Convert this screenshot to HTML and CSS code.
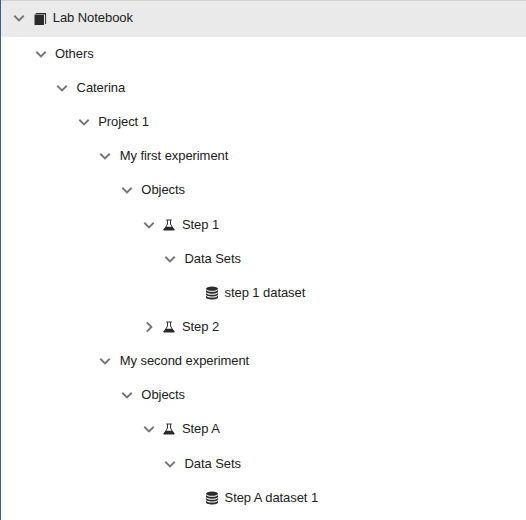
FILE: index.html
```
<!DOCTYPE html>
<html lang="en">
<head>
<meta charset="utf-8">
<title>Lab Notebook</title>
<link rel="stylesheet" href="styles.css">
</head>
<body>
<svg class="defs" width="0" height="0" aria-hidden="true">
  <symbol id="chevron" viewBox="0 0 12 12"><path d="M1.300 3.800 6 8.400l4.700-4.600" fill="none" stroke="#757575" stroke-width="1.900"/></symbol>
  <symbol id="book" viewBox="0 0 14 14"><path d="M1 3 3 1h10v10.500h-1V3z" fill="#8d8d8d"/><path d="M1 3h1v10H1z" fill="#8d8d8d"/><path d="M2 3h9v10H2zM3 1h10v1H3zM12.200 1.500h.9V12h-.9z" fill="#2b2b2b"/></symbol>
  <symbol id="flask" viewBox="0 0 12 12"><path d="M3.200 1h5.600M4.500 1v4L1.500 10.400h9L7.500 5V1" fill="none" stroke="#333" stroke-width="1"/><path d="M2.600 7.800h6.800l2 2.500V11.500H.6v-1.200z" fill="#2b2b2b"/></symbol>
  <symbol id="database" viewBox="0 0 14 14"><g fill="#2b2b2b"><ellipse cx="7" cy="2.700" rx="6" ry="2.100"/><path d="M1 4c.9 1.300 3.200 1.800 6 1.800S12.100 5.300 13 4v1.700c0 1.100-2.700 2-6 2s-6-.9-6-2z"/><path d="M1 6.900c.9 1.300 3.200 1.800 6 1.800s5.100-.5 6-1.800v1.700c0 1.100-2.700 2-6 2s-6-.9-6-2z"/><path d="M1 9.800c.9 1.300 3.200 1.800 6 1.800s5.100-.5 6-1.800v1.700c0 1.100-2.700 2-6 2s-6-.9-6-2z"/></g></symbol>
</svg>
<nav class="tree">
  <div class="row root"><svg class="toggle"><use href="#chevron"/></svg><svg class="icon book"><use href="#book"/></svg><span>Lab Notebook</span></div>
  <ul>
    <li><div class="row"><svg class="toggle"><use href="#chevron"/></svg><span>Others</span></div>
      <ul>
        <li><div class="row"><svg class="toggle"><use href="#chevron"/></svg><span>Caterina</span></div>
          <ul>
            <li><div class="row"><svg class="toggle"><use href="#chevron"/></svg><span>Project 1</span></div>
              <ul>
                <li><div class="row"><svg class="toggle"><use href="#chevron"/></svg><span>My first experiment</span></div>
                  <ul>
                    <li><div class="row"><svg class="toggle"><use href="#chevron"/></svg><span>Objects</span></div>
                      <ul>
                        <li><div class="row"><svg class="toggle"><use href="#chevron"/></svg><svg class="icon flask"><use href="#flask"/></svg><span>Step 1</span></div>
                          <ul>
                            <li><div class="row"><svg class="toggle"><use href="#chevron"/></svg><span>Data Sets</span></div>
                              <ul>
                                <li><div class="row leaf"><svg class="icon"><use href="#database"/></svg><span>step 1 dataset</span></div></li>
                              </ul>
                            </li>
                          </ul>
                        </li>
                        <li><div class="row"><svg class="toggle closed"><use href="#chevron"/></svg><svg class="icon flask"><use href="#flask"/></svg><span>Step 2</span></div></li>
                      </ul>
                    </li>
                  </ul>
                </li>
                <li><div class="row"><svg class="toggle"><use href="#chevron"/></svg><span>My second experiment</span></div>
                  <ul>
                    <li><div class="row"><svg class="toggle"><use href="#chevron"/></svg><span>Objects</span></div>
                      <ul>
                        <li><div class="row"><svg class="toggle"><use href="#chevron"/></svg><svg class="icon flask"><use href="#flask"/></svg><span>Step A</span></div>
                          <ul>
                            <li><div class="row"><svg class="toggle"><use href="#chevron"/></svg><span>Data Sets</span></div>
                              <ul>
                                <li><div class="row leaf"><svg class="icon"><use href="#database"/></svg><span>Step A dataset 1</span></div></li>
                              </ul>
                            </li>
                          </ul>
                        </li>
                      </ul>
                    </li>
                  </ul>
                </li>
              </ul>
            </li>
          </ul>
        </li>
      </ul>
    </li>
  </ul>
</nav>
</body>
</html>
```
FILE: styles.css
```
* {
  box-sizing: border-box;
}

body {
  margin: 0;
  height: 520px;
  overflow: hidden;
  background: #fff;
  color: #212121;
  font: 13px/18px "Liberation Sans", Arial, sans-serif;
  letter-spacing: -0.07px;
}

.defs {
  position: absolute;
}

.tree {
  height: 520px;
  border-left: 1px solid #3c5c94;
}

ul {
  margin: 0;
  padding: 0 0 0 21.6px;
  list-style: none;
}

.tree > ul {
  padding-left: 33.6px;
}

.row {
  display: flex;
  align-items: center;
  height: 34.15px;
  white-space: nowrap;
}

.root {
  height: 36.8px;
  padding-left: 11.8px;
  padding-bottom: 2px;
  border-top: 1px solid #d2d2d2;
  background: #eaeaea;
}

.toggle {
  flex: none;
  width: 12px;
  height: 12px;
  margin-right: 8.4px;
}

.closed {
  transform: rotate(-90deg);
}

.icon {
  flex: none;
  width: 14px;
  height: 14px;
  margin-right: 5.6px;
}

.book {
  margin-top: 2px;
}

.flask {
  width: 12px;
  height: 12px;
  margin-right: 7px;
}

.leaf {
  padding-left: 19.2px;
}
```
